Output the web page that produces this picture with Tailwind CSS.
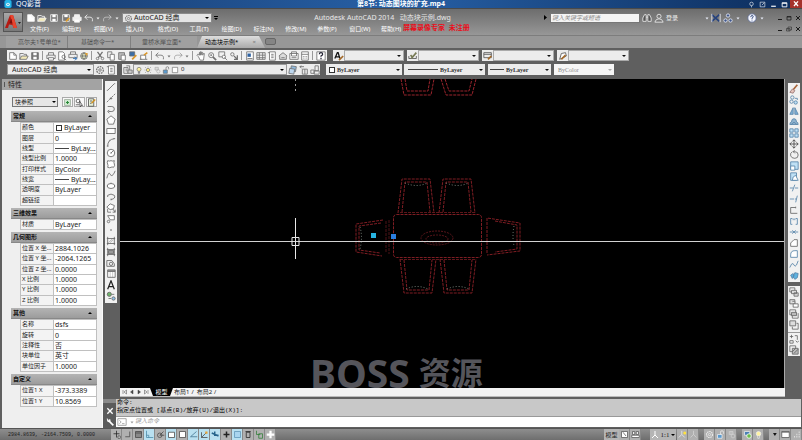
<!DOCTYPE html>
<html lang="zh-CN">
<head>
    <title>AutoCAD 2014</title>
    <meta charset="UTF-8">
    <meta name="viewport" content="width=device-width, initial-scale=1.0">
    <script src="https://cdn.jsdelivr.net/npm/@tailwindcss/browser@4"></script>
</head>
<body class="flex min-h-screen flex-col overflow-hidden bg-[#5f5f5f] font-['Noto_Sans','Noto_Sans_CJK_SC',sans-serif] text-[7px] leading-[10px] text-[#222]">

    <!-- Player title bar -->
    <header class="flex h-2 items-center justify-between bg-linear-to-r from-[#173a6c] via-[#2760a6] via-50% to-[#0d2d5c] leading-[8px] text-white">
        <div class="flex h-2 w-20 items-center gap-1 pl-1">
            <svg class="h-[8px] w-[8px]" viewBox="0 0 8 9"><rect width="8" height="9" rx="2" fill="#25b5e8"/><circle cx="4" cy="5" r="2" fill="#fff"/><circle cx="4" cy="5" r="1" fill="#25b5e8"/></svg>
            <span>QQ影音</span>
        </div>
        <h1 class="font-bold">第8节: 动态图块的扩充.mp4</h1>
        <div class="flex h-2 w-20 items-center justify-end text-white" data-icons="pin full min max" data-btn="player">
            <button class="order-last flex h-2 w-[12px] justify-center bg-[#a5322c]" aria-label="关闭"><svg class="size-2" viewBox="0 0 12 12" fill="none" stroke="currentColor" stroke-width="2"><path d="M3 2l6 7M9 2l-6 7"/></svg></button>
        </div>
    </header>

    <!-- Application header: quick access and menus -->
    <div class="flex h-[27px] border-t border-[#4a4a4a] bg-linear-to-b from-[#6d6d6d] to-[#979797]">
        <button class="ml-[3px] mt-[3px] flex h-[20px] w-[20px] shrink-0 items-center border border-[#555] bg-linear-to-b from-[#a8a8a8] to-[#787878]" aria-label="应用程序菜单">
            <svg class="h-[18px] w-[18px]" viewBox="0 0 18 18"><path d="M1 15L6 2h3l4 13h-3.500L8.500 12 5 11.500 4 15z" fill="#b51a12"/><path d="M6 2h3l4 13h-3.500z" fill="#e8452f"/><path d="M7.300 5.500L5.500 10l3 .5z" fill="#7c0e09"/><path d="M14 9h3l-1.500 2z" fill="#222"/></svg>
        </button>
        <div class="min-w-0 flex-1">
            <div class="flex h-[14px] items-end">
                <div class="flex h-[11px] w-[97px] shrink-0 items-center pl-[2px] text-[#f2f2f2]" data-icons="new open save saveas print undo v redo v" data-btn="quick"></div>
                <div class="relative ml-[2px] flex h-[10px] w-[90px] shrink-0 items-center border border-[#8a8a8a] bg-[#e4e4e4]">
                    <span class="text-[#777]" data-icons="gear" data-btn="plain"></span>
                    <select class="h-full flex-1 appearance-none text-[7px] leading-[8px] outline-none" aria-label="工作空间"><option>AutoCAD 经典</option></select>
                    <svg class="absolute right-[2px] size-[4px]" viewBox="0 0 4 4"><path d="M0 1h4L2 3z"/></svg>
                </div>
                <svg class="mb-[3px] ml-[2px] size-[4px] shrink-0" viewBox="0 0 4 4"><path d="M0 0h4v1H0zM0 2h4L2 4z"/></svg>
                <div class="flex-1 pl-[4px] text-center text-[#e8e8e8]">
                    <span class="whitespace-pre">Autodesk AutoCAD 2014   动态块示例.dwg</span>
                </div>
                <svg class="mb-[3px] mr-[2px] size-[5px] shrink-0" viewBox="0 0 5 5"><path d="M1 0v5l3-2.500z"/></svg>
                <input class="h-[10px] w-[90px] shrink-0 border border-[#777] bg-[#f4f4f4] px-px text-[6px] italic placeholder:text-[#888]" type="text" aria-label="搜索" placeholder="键入关键字或短语">
                <div class="flex h-[11px] w-[26px] shrink-0 items-center pl-px text-[#eee]" data-icons="find user" data-btn="wide"></div>
                <a class="w-[37px] shrink-0 text-[6px] text-[#eee]" href="#">登录</a>
                <div class="flex h-[11px] w-[72px] shrink-0 items-center justify-start text-[#e9edf8]" data-icons="v exch share v _ help v" data-btn="info"></div>
                <div class="flex h-[11px] w-[27px] shrink-0 items-center text-[#1c1c1c]" data-icons="min max close" data-btn="win"></div>
            </div>
            <div class="flex h-[12px] items-center justify-between">
                <nav class="relative grid w-[390px] grid-cols-12 pl-[7px] text-[6px] text-white">
                    <a href="#">文件(F)</a><a href="#">编辑(E)</a><a href="#">视图(V)</a><a href="#">插入(I)</a>
                    <a href="#">格式(O)</a><a href="#">工具(T)</a><a href="#">绘图(D)</a><a href="#">标注(N)</a>
                    <a href="#">修改(M)</a><a href="#">参数(P)</a><a href="#">窗口(W)</a><a href="#">帮助(H)</a>
                    <span class="absolute -top-px left-[380px] whitespace-pre text-[7px] font-bold text-[#e8101c]">屏幕录像专家  未注册</span>
                </nav>
                <div class="flex h-[11px] w-[27px] shrink-0 items-center text-[#1c1c1c]" data-icons="min restore close" data-btn="win"></div>
            </div>
        </div>
    </div>

    <!-- Drawing tabs -->
    <div class="flex h-[13px] items-end border-t border-[#7d7d7d] bg-[#979797] pl-[6px] text-[6px] leading-[12px] text-[#505050]">
        <a class="w-[62px] border-r border-[#808080] bg-[#a0a0a0] pl-[12px]" href="#">高尔夫1号单位*</a>
        <a class="w-[63px] border-r border-[#808080] bg-[#a0a0a0] pl-[13px]" href="#">基础命令一*</a>
        <a class="w-[66px] bg-[#a0a0a0] pl-[11px]" href="#">童桥水岸立面*</a>
        <a class="flex w-[68px] justify-between bg-linear-to-b from-[#dedede] to-[#aaaaaa] pl-[8px] pr-[9px] text-black [clip-path:polygon(5px_0,62px_0,100%_100%,0_100%)]" href="#">动态块示例*<span class="text-[#777]">×</span></a>
        <button class="mb-[3px] h-[7px] w-[11px] rounded-[2px] border border-[#666] bg-[#858585]" aria-label="新图形"></button>
    </div>

    <!-- Toolbars -->
    <div class="flex flex-col gap-[3px] pb-[4px] pl-[7px] pt-[2px]">
        <div class="flex h-[11px]">
            <div class="flex w-[320px] shrink-0 items-center bg-[#f1f1f1] text-[#707070]" data-icons="new open save | print preview publish globe | cut copy paste match block | undo v redo v | hand zoom zoomwin zoomprev | props grid palette house markup calc | helpbox" data-btn="tool"></div>
            <div class="ml-[6px] flex w-[71px] bg-[#ececec]" data-icons="astyle" data-btn="tool" data-select="文字样式"></div>
            <div class="ml-[3px] flex w-[72px] bg-[#ececec]" data-icons="dstyle" data-btn="tool" data-select="标注样式"></div>
            <div class="ml-[3px] flex w-[72px] bg-[#ececec]" data-icons="tstyle" data-btn="tool" data-select="表格样式"></div>
            <div class="ml-[3px] flex w-[72px] bg-[#ececec]" data-icons="mstyle" data-btn="tool" data-select="多重引线样式"></div>
        </div>
        <div class="flex h-[11px]">
            <div class="flex w-[110px] shrink-0 bg-[#ececec] text-[#707070]">
                <div class="relative flex w-[87px] items-center border border-[#999]">
                    <select class="h-full w-full appearance-none pl-[4px] text-[7px] leading-[9px] text-[#222] outline-none" aria-label="工作空间"><option>AutoCAD 经典</option></select>
                    <svg class="absolute right-[2px] size-[4px]" viewBox="0 0 4 4"><path d="M0 1h4L2 3z"/></svg>
                </div>
                <div class="flex items-center" data-icons="gear palette" data-btn="tool"></div>
            </div>
            <div class="ml-[5px] flex w-[198px] shrink-0 bg-[#ececec] text-[#707070]">
                <div class="flex items-center" data-icons="layers" data-btn="tool"></div>
                <div class="relative flex flex-1 items-center border border-[#999]">
                    <span class="flex" data-icons="bulb sun dim lock box" data-btn="layer"></span>
                    <select class="h-full flex-1 appearance-none pl-[2px] text-[6px] leading-[9px] text-[#222] outline-none" aria-label="图层"><option>0</option></select>
                    <svg class="absolute right-[2px] size-[4px]" viewBox="0 0 4 4"><path d="M0 1h4L2 3z"/></svg>
                </div>
                <div class="flex items-center" data-icons="sheets layprev laystate" data-btn="tool"></div>
            </div>
            <div class="ml-[6px] flex w-[76px] items-center bg-[#ececec] pl-[2px]" data-lead="box" data-select="颜色" data-value="ByLayer"></div>
            <div class="ml-[2px] flex w-[81px] items-center bg-[#ececec] pl-[2px]" data-lead="line" data-select="线型" data-value="ByLayer"></div>
            <div class="ml-[3px] flex w-[63px] items-center bg-[#ececec] pl-[2px]" data-lead="short" data-select="线宽" data-value="ByLayer"></div>
            <div class="ml-[3px] flex w-[60px] items-center bg-[#f6f6f6] pl-[2px]" data-select="打印样式" data-value="ByColor" data-off="1"></div>
        </div>
    </div>

    <!-- Workspace -->
    <div class="flex flex-1">
        <!-- Properties palette -->
        <aside class="ml-[2px] w-[101px] shrink-0 border-r border-[#fafafa] bg-[#efefef]">
            <h2 class="flex h-[11px] items-center gap-[3px] bg-[#a3a3a3] pl-[2px]"><i class="h-[5px] w-px bg-[#555]"></i>特性</h2>
            <div class="mt-[7px] flex h-[10px] pl-[10px]">
                <div class="relative mr-[4px] flex w-[46px] items-center border border-[#777] bg-[#e6e6e6]">
                    <select class="h-full w-full appearance-none pl-[2px] text-[6px] leading-[8px] outline-none" aria-label="对象类型"><option>块参照</option></select>
                    <svg class="absolute right-px size-[4px]" viewBox="0 0 4 4"><path d="M0 1h4L2 3z"/></svg>
                </div>
                <div class="flex gap-px text-[#444]" data-icons="plus pick quick" data-btn="boxed"></div>
            </div>
            <div id="props" class="mt-[4px] flex flex-col gap-[2px] pl-[9px] pr-[5px]"></div>
        </aside>

        <div class="flex min-w-0 flex-1 flex-col">
            <div class="flex flex-1">
                <div class="ml-[2px] mr-[3px] mt-[2px] h-[222px] w-[12px] shrink-0 bg-[#f1f1f1] text-[#666]" data-icons="ln xline pline poly rect arc circ cloud spline ell ellarc insert mkblock pt hatch grad region table text addsel" data-btn="side"></div>

                <div class="flex min-w-0 flex-1 flex-col">
                    <main class="relative h-[309px] flex-auto overflow-hidden border-r border-[#aaa] bg-black">
                        <svg class="absolute inset-0 h-full w-full" viewBox="0 0 665 309" preserveAspectRatio="xMinYMin slice" fill="none">
                            <g stroke="#7e1d23" stroke-dasharray="3 1">
                                <!-- block above -->
                                <path d="M281 0l3 16h27l3-16M285 0l2 12h21l2-12M321 0l5 16h26l4-16M325 0l4 12h20l3-12" stroke="#9a242c"/>
                                <!-- table -->
                                <rect x="273.500" y="135.500" width="88" height="43" rx="3"/>
                                <path d="M280 133.500h76M280 180.500h76" stroke="#5c161a"/>
                                <ellipse cx="317" cy="159" rx="16" ry="7" stroke="#5a161b" stroke-dasharray="2 1"/>
                                <ellipse cx="317" cy="160" rx="11" ry="4" stroke="#5a161b" stroke-dasharray="2 1"/>
                                <!-- chairs -->
                                <path d="M278 134l4-34h28l4 34M282 133l3-30h22l3 30"/>
                                <path d="M319 134l4-34h28l4 34M323 133l3-30h22l3 30"/>
                                <path d="M280 180l4 34h28l4-34M284 181l3 30h22l3-30"/>
                                <path d="M320 180l4 34h28l4-34M324 181l3 30h22l3-30"/>
                                <path d="M263 141l-27 4v28l26 4M261 144l-22 3v24l21 3"/>
                                <path d="M269 141v34M266 142v32" stroke="#4c1216"/>
                                <path d="M367 174v-35l33 5v28l-33 4M375 142l22 4v24l-22 3"/>
                            </g>
                            <g stroke="#7d877f" stroke-dasharray="1 2">
                                <path d="M285 104q12 5 22 0M326 104q12 5 22 0M286 210q11-5 22 0M327 210q11-5 22 0M240 148q3 10 0 22M394 147q-2 10 0 20"/>
                            </g>
                            <path d="M0 162.500h665" stroke="#d2d2d2"/>
                            <path d="M175.500 139v41M172 158.500h7v8h-7z" stroke="#e8e8e8"/>
                            <path d="M175.500 0v12" stroke="#999" stroke-dasharray="2 3"/>
                            <path d="M251 154h5v5h-5z" fill="#27b3e0"/>
                            <path d="M271 155h5v5h-5z" fill="#2a7fe0"/>
                        </svg>
                        <div class="absolute left-[190px] top-[278px] flex items-center gap-[9px] whitespace-nowrap font-bold leading-[32px] text-[#55555b]">
                            <span class="text-[39px]">BOSS</span><span class="text-[32px]">资源</span>
                        </div>
                    </main>
                    <div class="flex h-[9px] items-center border-b border-[#bbb] bg-[#f3f3f3] pl-[2px] text-[6px] leading-[8px]">
                        <div class="flex w-[28px] gap-px text-[#444]" data-icons="first prev next last" data-btn="nav"></div>
                        <a class="flex h-2 w-[23px] justify-center bg-black text-white [clip-path:polygon(0_0,100%_0,20px_100%,3px_100%)]" href="#">模型</a>
                        <a class="pl-px" href="#">布局1</a><span class="px-[2px]">/</span>
                        <a class="pl-px" href="#">布局2</a><span class="px-[2px]">/</span>
                    </div>
                </div>

                <div class="ml-[3px] mr-[2px] mt-[4px] w-[12px] shrink-0">
                    <div class="h-[199px] bg-[#f1f1f1] text-[#5583a8]" data-icons="erase copyobj mirror offset array move rotate scale stretch trim extend brk break2 join chamfer fillet blend explode" data-btn="side"></div>
                    <div class="mt-[4px] h-[70px] bg-[#f1f1f1] text-[#666]" data-icons="front back above under - order hback" data-btn="side"></div>
                </div>
            </div>

            <!-- Command window -->
            <div class="mt-[2px] flex h-[29px] pr-px font-['Liberation_Mono','Noto_Sans_CJK_SC',monospace]">
                <div class="flex w-[13px] shrink-0 flex-col items-center border-t-4 border-[#8a8a8a] bg-[#5b5b5b] pt-[2px] text-white" data-icons="close wrench" data-btn="cmd"></div>
                <div class="flex-1">
                    <div class="h-[17px] whitespace-pre bg-[#c8c8c8] pl-px text-[6px] leading-[8px] text-black"><p>命令:</p><p>指定点位置或 [基点(B)/放弃(U)/退出(X)]:</p></div>
                    <div class="flex h-[11px] items-center border-t border-[#999] bg-white text-[#999]">
                        <span class="flex items-center" data-icons="prompt v" data-btn="quick"></span>
                        <input class="h-[9px] flex-1 text-[6px] italic outline-none placeholder:text-[#999]" type="text" aria-label="命令" placeholder="键入命令">
                    </div>
                </div>
            </div>
        </div>
    </div>

    <!-- Status bar -->
    <footer class="flex h-[12px] shrink-0 items-center border-t border-[#555] bg-linear-to-b from-[#8e8e8e] to-[#6e6e6e]">
        <div class="w-[111px] pl-[8px] font-['Liberation_Mono',monospace] text-[5px] text-[#1c1c1c]">2984.8639, -2164.7509, 0.0000</div>
        <div class="flex text-[#444]" data-icons="snap orthoL gridd !ortho polar !osnap box !track !ducs !dyn cross !lwt tpy qp pluss" data-btn="status"></div>
        <div class="flex-1"></div>
        <button class="h-[11px] w-[15px] bg-[#b5b5b5] text-[6px] leading-[10px]">模型</button>
        <div class="flex w-[31px] text-[#555]" data-icons="sheet1 sheet2" data-btn="status"></div>
        <button class="flex h-[11px] w-[26px] items-center justify-between bg-[#b5b5b5] px-px font-['Liberation_Serif',serif] text-[7px]">
            <svg class="size-[8px]" viewBox="0 0 8 8" fill="none" stroke="#fff"><path d="M4 0v4L1 7M4 4l3 3"/></svg>1:1<svg class="size-[4px]" viewBox="0 0 4 4"><path d="M0 1h4L2 3z"/></svg>
        </button>
        <div class="ml-px flex text-[#eee]" data-icons="annoy anno _ gear lock dim _ hw bulb _ tri clean grip" data-btn="status"></div>
    </footer>

    <script>
        // Icon artwork, all on a 12x12 grid
        const icons = {
            new: '<path d="M2 2h5l3 3v5H2z" fill="#fff"/><path d="M7 2v3h3"/>',
            open: '<path d="M1 10V3h4l1 1h3v2"/><path d="M1 10l2-4h8l-2 4z" fill="#f3e9b8"/>',
            save: '<path d="M2 2h8v8H2z" fill="#777"/><path d="M4 2h4v3H4zM4 7h4v3H4z" fill="#fff" stroke="none"/>',
            saveas: '<path d="M2 2h8v8H2z" fill="#777"/><path d="M4 2h4v3H4z" fill="#fff" stroke="none"/><path d="M6 10l4-4" stroke="#e0a030" stroke-width="2"/>',
            print: '<path d="M3 5V2h6v3M1 5h10v4H1z" fill="#eee"/><path d="M3 8h6v3H3z" fill="#fff"/>',
            preview: '<path d="M2 1h5l2 2v8H2z" fill="#fff"/><circle cx="8" cy="7" r="2"/><path d="M9 9l2 2"/>',
            publish: '<path d="M3 4V1h6v3M1 4h10v4H1z" fill="#eee"/><path d="M6 9h4M8 7l3 2-3 2" stroke="#2f6fb3"/>',
            globe: '<circle cx="6" cy="6" r="4" fill="#dfe6c0"/><path d="M2 6h8M6 2q-4 4 0 8q4-4 0-8"/><path d="M7 2l4 1-2 3z" fill="#e0a030" stroke="none"/>',
            cut: '<path d="M3 1l5 7M9 1L4 8" stroke-width="1.500"/><circle cx="3" cy="9" r="1.500"/><circle cx="9" cy="9" r="1.500"/>',
            copy: '<path d="M2 1h5v7H2z"/><path d="M5 4h5v7H5z" fill="#fff"/>',
            paste: '<path d="M2 2h7v8H2z" fill="#bbb"/><path d="M5 5h5v6H5z" fill="#fff"/>',
            match: '<path d="M2 1h6v5H2z" fill="#3b6fa8"/><path d="M5 10l5-5" stroke="#d9962a" stroke-width="2"/>',
            block: '<path d="M2 5h6v5H2z" fill="#fff"/><path d="M6 5l4-3" stroke="#d9962a" stroke-width="2"/><path d="M1 10h2M8 10h2"/>',
            undo: '<path d="M4 2L1 5l3 3M1 5h6q4 0 3 5"/>',
            redo: '<path d="M8 2l3 3-3 3M11 5H5Q1 5 2 10" opacity=".6"/>',
            v: '<path d="M3 5h6L6 9z" fill="currentColor" stroke="none"/>',
            hand: '<path d="M3 7L1 5l1-1 2 1V2h1v3-4h1v4l1-4 1 1v3l1-2h1L9 11H5z" fill="#fff"/>',
            zoom: '<circle cx="5" cy="5" r="3"/><path d="M7 7l4 4" stroke-width="2"/><path d="M4 5h2M5 4v2"/>',
            zoomwin: '<path d="M1 1h7v6H1z"/><circle cx="7" cy="7" r="2" fill="#fff"/><path d="M8 8l3 3"/>',
            zoomprev: '<circle cx="4" cy="4" r="2"/><path d="M6 6l4 4M10 5v5H6" stroke-width="1.500"/>',
            props: '<path d="M2 1h8v10H2z" fill="#fff"/><path d="M3 3h4v4H3z" fill="#2e62a2" stroke="none"/><path d="M3 9h6"/>',
            grid: '<path d="M1 2h10v8H1zM1 5h10M1 8h10M4 2v8M8 2v8"/>',
            palette: '<path d="M3 1h7v10H3z" fill="#fff"/><path d="M1 2h2M5 4h3M5 6h3M5 8h3"/>',
            house: '<path d="M1 6l5-4 5 4M2 6v4h8V6" fill="#ddd"/><path d="M4 8h4"/>',
            markup: '<path d="M1 3h10v7H1z" fill="#fff"/><path d="M3 1h6v5H3zM3 8h6"/>',
            calc: '<path d="M2 1h8v10H2zM2 4h8" fill="#fff"/><path d="M4 6v4M6 6v4M8 6v4" stroke-dasharray="1 1"/>',
            helpbox: '<path d="M1 1h10v10H1z" fill="#fff"/><path d="M4 4q0-2 2-2t2 2q0 1-2 2v1M6 8v2" stroke="#223" stroke-width="1.500"/>',
            astyle: '<path d="M1 9l3-7h1l2 7M2 7h4" stroke="#111" stroke-width="1.500"/><path d="M6 11l5-5" stroke="#a46a2a" stroke-width="2"/>',
            dstyle: '<path d="M1 9h9M1 9V6M10 9V6" stroke="#555"/><path d="M4 9l6-7M3 5l3 3" stroke="#777a55" stroke-width="2"/>',
            tstyle: '<path d="M1 2h9v6H1zM1 4h9" stroke="#555"/><path d="M6 10l4-4" stroke="#a46a2a" stroke-width="2"/>',
            mstyle: '<path d="M2 10l2-7 5-1 1 4z" fill="#fff" stroke="#555"/><path d="M4 10l5-5" stroke="#a46a2a" stroke-width="2"/>',
            gear: '<circle cx="6" cy="6" r="4" stroke-width="1.500" stroke-dasharray="2 1"/><circle cx="6" cy="6" r="1.500"/>',
            layers: '<path d="M1 3h5v7H1zM4 1h4v8M3 5h2M3 7h2"/><path d="M6 6h5v4H6z" fill="#ccc"/>',
            bulb: '<circle cx="6" cy="5" r="3" fill="#fff3a0"/><path d="M5 8v3h2V8" fill="#999"/>',
            sun: '<circle cx="6" cy="6" r="2.500" fill="#ffe97a"/><path d="M6 1v1M6 10v1M1 6h1M10 6h1M2 2l1 1M9 9l1 1M10 2L9 3M3 9l-1 1"/>',
            dim: '<g opacity=".5"><path d="M3 2h5v4H3z" fill="#ccc"/><circle cx="8" cy="8" r="2.500"/></g>',
            lock: '<path d="M2 6h6v5H2z" fill="#5a9bd0"/><path d="M6 6V3q0-2 2-2t2 2v2"/>',
            box: '<path d="M2 2h8v8H2z" fill="#fff"/>',
            sheets: '<path d="M4 1l6 1-1 6-6-1z" fill="#8fb8dc"/><path d="M2 4l6 1-1 6-6-1z" fill="#bcd6ee"/>',
            layprev: '<path d="M1 2h5M1 2l2-1M1 2l2 2M4 5h6v6H4zM7 5v6"/>',
            laystate: '<path d="M6 1h4v6H6zM1 6h4v4H1zM5 7h6v4H5z" fill="#eee"/>',
            pin: '<circle cx="6" cy="5" r="3"/><path d="M6 8v3" />',
            full: '<path d="M2 2h8v8H2zM5 7l4-4"/>',
            min: '<path d="M2 9h8" stroke-width="2"/>',
            max: '<path d="M2 3h8v7H2zM2 4h8" stroke-width="1.500"/>',
            restore: '<path d="M4 2h7v6H4zM1 5h7v5H1z"/>',
            close: '<path d="M2 2l8 8M10 2l-8 8" stroke-width="2"/>',
            find: '<path d="M1 10V6l2-4h2v8zM7 10V2h2l2 4v4z" fill="#555"/><path d="M5 5h2"/>',
            user: '<circle cx="6" cy="4" r="2.500" fill="#777"/><path d="M1 11q1-4 5-4t5 4z" fill="#777"/>',
            exch: '<path d="M1 2l9 8M10 2l-9 8" stroke="#26427d" stroke-width="2"/><path d="M11 1v10M1 1v10"/>',
            share: '<circle cx="6" cy="3" r="2" fill="#40578a"/><circle cx="3" cy="9" r="2" fill="#40578a"/><circle cx="9" cy="9" r="2" fill="#40578a"/>',
            help: '<circle cx="6" cy="6" r="5" fill="#f4f6ff" stroke="#5b6b94"/><path d="M4.500 5q0-2 1.500-2t1.500 1.500q0 1-1.500 1.500v1M6 8v1" stroke="#20386f"/>',
            _: '', '-': '',
            plus: '<path d="M2 2h8v8H2z" fill="#cfe8cf" stroke="#9a9"/><path d="M6 4v4M4 6h4" stroke="#2a8a3a" stroke-width="1.500"/>',
            pick: '<circle cx="4" cy="4" r="2.500"/><path d="M1 9h5M6 4l4 6-2 0-1 2z" fill="#fff"/>',
            quick: '<path d="M2 1h7v10H2zM4 4h3M4 7h2" fill="#e6f0da"/><path d="M6 7l5-5" stroke="#d09020" stroke-width="2"/>',
            ln: '<path d="M2 10l8-8M1 10h1M10 2h1"/>',
            xline: '<path d="M1 11L11 1" stroke-dasharray="3 1"/><path d="M5 6h2v1H5z"/>',
            pline: '<path d="M2 3h5q3 0 3 3t-3 3H3M4 7L2 9l2 2"/>',
            poly: '<path d="M6 1l5 4-2 6H3L1 5z" fill="#fff"/>',
            rect: '<path d="M1 3h10v6H1z" fill="#fff"/><path d="M0 9h2M10 3h2"/>',
            arc: '<path d="M2 11q0-8 8-9M1 11h2M9 2h2M4 4h1"/>',
            circ: '<circle cx="6" cy="6" r="4.500" fill="#fff"/><path d="M6 6l3-3M5 6h2"/>',
            cloud: '<path d="M2 2q2 1 4 0 2 1 4 0-1 2 0 4 1 2-1 4-2-1-3 0-2 1-4 0 1-2 0-4-1-2 0-4z" fill="#fff"/>',
            spline: '<path d="M1 10q2-9 4-5t3 1q2-2 3-5"/>',
            ell: '<ellipse cx="6" cy="6" rx="4.500" ry="3" fill="#fff"/><path d="M1 6h1M10 6h1M6 3V2"/>',
            ellarc: '<path d="M2 4q4-3 8 0 2 4-4 5M2 4v2"/><path d="M6 8v2"/>',
            insert: '<path d="M1 5l4-4 5 2-1 4-4 1zM2 7v4h4" fill="#fff"/><path d="M8 7l3 4M11 8v3H8"/>',
            mkblock: '<path d="M2 2h8v5H5z" fill="#fff"/><circle cx="3" cy="9" r="1.500"/>',
            pt: '<path d="M6 5v2" stroke-width="1.500"/>',
            hatch: '<path d="M2 1v10M10 1v10M1 3h10M1 9h10"/><path d="M3 8l5-5M5 8l4-4" opacity=".5"/>',
            grad: '<path d="M2 1v10M10 1v10M1 3h10M1 9h10"/><path d="M3 4h6v4H3z" fill="#999"/>',
            region: '<path d="M1 3h6l3 4v3H1z" fill="#eee"/><circle cx="6" cy="7" r="2"/>',
            table: '<path d="M2 1h9v9H2z" fill="#fff"/><path d="M2 3h9M2 2h9"/><path d="M5 3v7M8 3v7" opacity=".4"/>',
            text: '<path d="M2 11L6 1l4 10M3 8h6" stroke="#222" stroke-width="1.500"/>',
            addsel: '<circle cx="4" cy="4" r="2.500" fill="#70b26c"/><circle cx="9" cy="9" r="2" fill="#8fc0e8"/><path d="M7 4h3M3 9h3"/>',
            erase: '<path d="M5 7l5-6" stroke="#a8653a" stroke-width="2"/><path d="M1 10l3-4 3 2-2 3z" fill="#e6c3ba" stroke="#977"/>',
            copyobj: '<circle cx="4" cy="3" r="2"/><circle cx="3" cy="8" r="2"/><circle cx="8" cy="9" r="2" fill="#bfe0f5"/><path d="M7 4h3v2"/>',
            mirror: '<path d="M5 2v8H1zM7 2v8h4z" fill="#7fb0d6"/>',
            offset: '<path d="M1 9q0-3 2-3 0-4 3-4t3 4q2 0 2 3z" fill="#8fb3cf"/><path d="M3 9q3-5 6 0"/>',
            array: '<path d="M1 1h4v4H1zM7 1h4v4H7zM1 7h4v4H1zM7 7h4v4H7z" fill="#bfe0f5"/>',
            move: '<path d="M6 1v10M1 6h10M4 3l2-2 2 2M4 9l2 2 2-2M3 4L1 6l2 2M9 4l2 2-2 2" stroke="#444"/>',
            rotate: '<path d="M4 2q-3 2-2 5t5 3 4-4-4-4H5M7 0L5 2l2 2" stroke="#666"/>',
            scale: '<path d="M2 1h9v9H2z" fill="#bfe0f5"/><path d="M2 6h5v5H2z" fill="#fff"/>',
            stretch: '<path d="M2 1h7v9H2z" fill="#bfe0f5"/><path d="M5 6l3-2 3 6H4z" fill="#fff"/>',
            trim: '<path d="M1 6h4M7 6h4M7 2L4 10"/>',
            extend: '<path d="M1 6h5M7 6h2M10 2L8 10"/>',
            brk: '<path d="M8 3H2v7h8M8 2v2" stroke="#666"/>',
            break2: '<path d="M4 3H2v7h2M8 3h2v7H8M5 3v2M7 3v2"/>',
            join: '<path d="M1 6h4M7 6h4M4 4l2 2-2 2M8 4L6 6l2 2"/>',
            chamfer: '<path d="M2 10V6l4-4h4v8z" fill="#fff" stroke="#666"/>',
            fillet: '<path d="M2 10V7q0-5 5-5h3v8z" fill="#fff"/>',
            blend: '<path d="M1 9l2-4q2-2 3 1t3 0l2-5"/>',
            explode: '<path d="M2 5l3-2 1 3-2 3zM7 2l4 1-1 5-3 2-2-3z" fill="#5db2e0"/>',
            front: '<path d="M1 1h6v5H1z"/><path d="M3 4h6v4H3zM6 7h5v4H6z" fill="#ddd"/>',
            back: '<path d="M1 2h6v5H1z" fill="#ddd"/><path d="M4 4h3v3M5 7h6v4H5z" fill="#fff"/>',
            above: '<path d="M1 1h7v6H1zM4 7v4h7V5"/><path d="M3 4h6v4H3z" fill="#bbb"/>',
            under: '<path d="M1 1h7v6H1z" fill="#ddd"/><path d="M4 8v3h7V4H9"/>',
            order: '<path d="M1 3h4M3 1v4M7 2h3v5M8 8l2 2 2-2M1 8h4v3H1z"/>',
            hback: '<path d="M1 1h7v7H1z"/><path d="M4 4h7v7H4z" fill="#bbb"/><path d="M4 8l4-4M6 10l5-5"/>',
            first: '<path d="M2 2v8M9 2L4 6l5 4z"/>', last: '<path d="M10 2v8M3 2l5 4-5 4z"/>',
            prev: '<path d="M8 2L3 6l5 4z" fill="currentColor"/>', next: '<path d="M4 2l5 4-5 4z" fill="currentColor"/>',
            wrench: '<path d="M4 4l7 7" stroke-width="2.500"/><path d="M2 1q-1 5 3 5 2-2 1-4L4 4z" fill="#fff"/>',
            prompt: '<path d="M1 2h10v8H1zM3 4l2 2-2 2M6 8h3"/>',
            snap: '<path d="M6 1v9M2 5h8" stroke="#222"/><path d="M8 8h3v3H8z" fill="#eee"/>',
            orthoL: '<path d="M9 2v7H3"/>', gridd: '<path d="M2 2h8v8H2z" fill="#888"/><path d="M2 4h8"/>',
            ortho: '<path d="M2 1v9h9M2 7h3v3" stroke="#4787a6"/>', polar: '<circle cx="5" cy="7" r="3"/><path d="M5 7l5-5M5 7h6"/>',
            osnap: '<path d="M2 3h8v7H2z" fill="#fff"/>', track: '<path d="M10 2L2 9h9" stroke="#3b6f8c"/>',
            ducs: '<path d="M2 10h8M2 10V3M2 10l6-6"/><path d="M7 2h3v3H7z" fill="#e8a030" stroke="none"/>',
            dyn: '<path d="M1 4l9 4M5 2v5h5" stroke="#27648c" stroke-width="2"/>',
            cross: '<path d="M6 2v8M2 6h8" stroke="#222" stroke-width="2"/>',
            lwt: '<path d="M2 2h8v8H2z" fill="#a9d5ef" stroke="#5c93b5"/>', tpy: '<path d="M3 3h5v7H3zM2 2h7" stroke="#222"/>',
            qp: '<path d="M2 1v5h5M5 5h5v6H5z" stroke="#2f7d35"/>', pluss: '<path d="M6 1v10M1 6h10" stroke="#fff" stroke-width="3"/>',
            sheet1: '<path d="M2 2h8v8H2z" fill="#fff"/><path d="M4 3l4 5"/>',
            sheet2: '<path d="M1 7h10v3H1z" fill="#fff"/><path d="M2 2h3v4H2zM7 2h3v4H7z" fill="#eee"/>',
            anno: '<path d="M6 1v5l-4 4M6 6l4 4" opacity=".6"/>',
            annoy: '<path d="M5 1v5l-4 4M5 6l4 4"/><circle cx="9" cy="4" r="2" fill="#ffe23d" stroke="none"/>',
            hw: '<path d="M2 2h7v5H2z" fill="#4a7fb5"/><circle cx="8" cy="8" r="3" fill="#6bbd4a" stroke="#fff"/>',
            tri: '<path d="M4 4h5L6.500 8z" fill="#111" stroke="none"/>',
            clean: '<path d="M1 2h10v8H1z" fill="#fff" stroke="#555"/><path d="M1 3h10" stroke="#555"/>',
            grip: '<path d="M9 3h1M6 6h1M9 6h1M3 9h1M6 9h1M9 9h1" stroke-width="2"/>'
        };

        const buttonClass = {
            player: 'flex w-[11px] justify-center', quick: 'flex w-[12px] justify-center', plain: 'flex w-[11px] justify-center',
            wide: 'flex w-[12px] justify-center', info: 'flex w-[12px] justify-center', win: 'flex w-[9px] justify-center',
            tool: 'flex h-[11px] w-[11px] shrink-0 items-center justify-center', layer: 'flex w-[9px] justify-center',
            boxed: 'flex h-[10px] w-[11px] items-center justify-center border border-[#aaa] bg-[#f8f8f8]',
            side: 'flex h-[11px] w-[12px] items-center justify-center', nav: 'flex w-[6px] justify-center',
            cmd: 'flex h-[11px] w-[11px] items-center justify-center', status: 'flex h-[11px] w-[11px] items-center justify-center border-r border-[#888] bg-[#b0b0b0]'
        };
        const iconClass = {
            player: 'size-[7px]', quick: 'size-[10px]', plain: 'size-[9px]', wide: 'size-[10px]', info: 'size-[10px]', win: 'size-[6px]',
            tool: 'size-[10px]', layer: 'size-[8px]', boxed: 'size-[9px]', side: 'size-[10px]', nav: 'size-[6px]', cmd: 'size-[8px]', status: 'size-[9px]'
        };

        function iconSvg(name, cls) {
            return `<svg class="${cls}" viewBox="0 0 12 12" fill="none" stroke="currentColor">${icons[name]}</svg>`;
        }

        document.querySelectorAll('[data-icons]').forEach(bar => {
            const kind = bar.dataset.btn;
            bar.insertAdjacentHTML('beforeend', bar.dataset.icons.split(' ').map(key => {
                const on = key[0] === '!';
                const name = on ? key.slice(1) : key;
                if (name === '|') return '<i class="mx-[2px] h-[9px] w-px shrink-0 bg-[#999]"></i>';
                if (name === '-') return '<i class="block h-[3px] border-b border-[#999]"></i>';
                if (name === '_') return '<i class="w-[5px] shrink-0"></i>';
                if (name === 'v') return `<button class="flex w-[7px] shrink-0 justify-center" aria-label="v">${iconSvg(name, 'size-[6px]')}</button>`;
                if (on) return `<button class="flex h-[11px] w-[11px] items-center justify-center border-r border-[#888] bg-[#b9e0f0]" aria-label="${name}">${iconSvg(name, iconClass[kind])}</button>`;
                return `<button class="${buttonClass[kind]}" aria-label="${name}">${iconSvg(name, iconClass[kind])}</button>`;
            }).join(''));
        });

        // Drop-downs of the style and object property toolbars
        const leads = {
            box: '<i class="ml-px size-[6px] shrink-0 border border-[#333] bg-white"></i>',
            line: '<i class="ml-[2px] h-px w-[30px] shrink-0 bg-[#444]"></i>',
            short: '<i class="h-px w-[14px] shrink-0 bg-[#444]"></i>'
        };
        document.querySelectorAll('[data-select]').forEach(el => {
            const { select, value = '', lead, off } = el.dataset;
            el.insertAdjacentHTML('beforeend', `
                ${lead ? leads[lead] : ''}
                <div class="relative flex h-full flex-1 items-center ${value ? '' : 'border border-[#aaa]'}">
                    <select class="h-full w-full appearance-none pl-[2px] font-['Liberation_Serif',serif] text-[6px] leading-[10px] outline-none ${off ? 'text-[#888]' : 'font-bold text-[#333]'}" aria-label="${select}"><option>${value}</option></select>
                    <svg class="absolute right-[2px] size-[4px]" viewBox="0 0 4 4" fill="${off ? '#aaa' : '#111'}"><path d="M0 1h4L2 3z"/></svg>
                </div>`);
        });

        // Properties of the selected block reference
        const sections = [
            ['常规', 'h-[84px]', [['颜色', 'ByLayer', 'box'], ['图层', '0'], ['线型', 'ByLay...', 'short'], ['线型比例', '1.0000'], ['打印样式', 'ByColor'], ['线宽', 'ByLay...', 'short'], ['透明度', 'ByLayer'], ['超链接', '']]],
            ['三维效果', 'h-[11px]', [['材质', 'ByLayer']]],
            ['几何图形', 'h-[63px]', [['位置 X 坐...', '2884.1026'], ['位置 Y 坐...', '-2064.1265'], ['位置 Z 坐...', '0.0000'], ['X 比例', '1.0000'], ['Y 比例', '1.0000'], ['Z 比例', '1.0000']]],
            ['其他', 'h-[53px]', [['名称', 'dsfs'], ['旋转', '0'], ['注释性', '否'], ['块单位', '英寸'], ['单位因子', '1.0000']]],
            ['自定义', 'h-[22px]', [['位置1 X', '-373.3389'], ['位置1 Y', '10.8569']]]
        ];
        document.getElementById('props').innerHTML = sections.map(([title, height, rows]) => `
            <section>
                <h3 class="flex h-[11px] items-center justify-between border-b border-[#888] bg-linear-to-b from-[#b4b4b4] to-[#9c9c9c] pl-[2px] pr-[5px] text-[6px] font-bold text-[#111]">${title}<svg class="size-[4px]" viewBox="0 0 4 4"><path d="M0 3h4L2 1z"/></svg></h3>
                <table class="ml-[9px] w-[77px] table-fixed border-collapse text-[7px] leading-[9px] ${height}">
                    ${rows.map(([label, value, lead]) => `
                    <tr><th class="w-[33px] whitespace-nowrap border border-[#c0c0c0] bg-[#f3f3f3] p-0 pl-px text-left text-[6px] font-normal">${label}</th>
                    <td class="whitespace-nowrap border border-[#c0c0c0] bg-white p-0 pl-px"><div class="flex items-center gap-[2px]">${lead ? leads[lead] : ''}${value}</div></td></tr>`).join('')}
                </table>
            </section>`).join('');
    </script>
</body>
</html>
